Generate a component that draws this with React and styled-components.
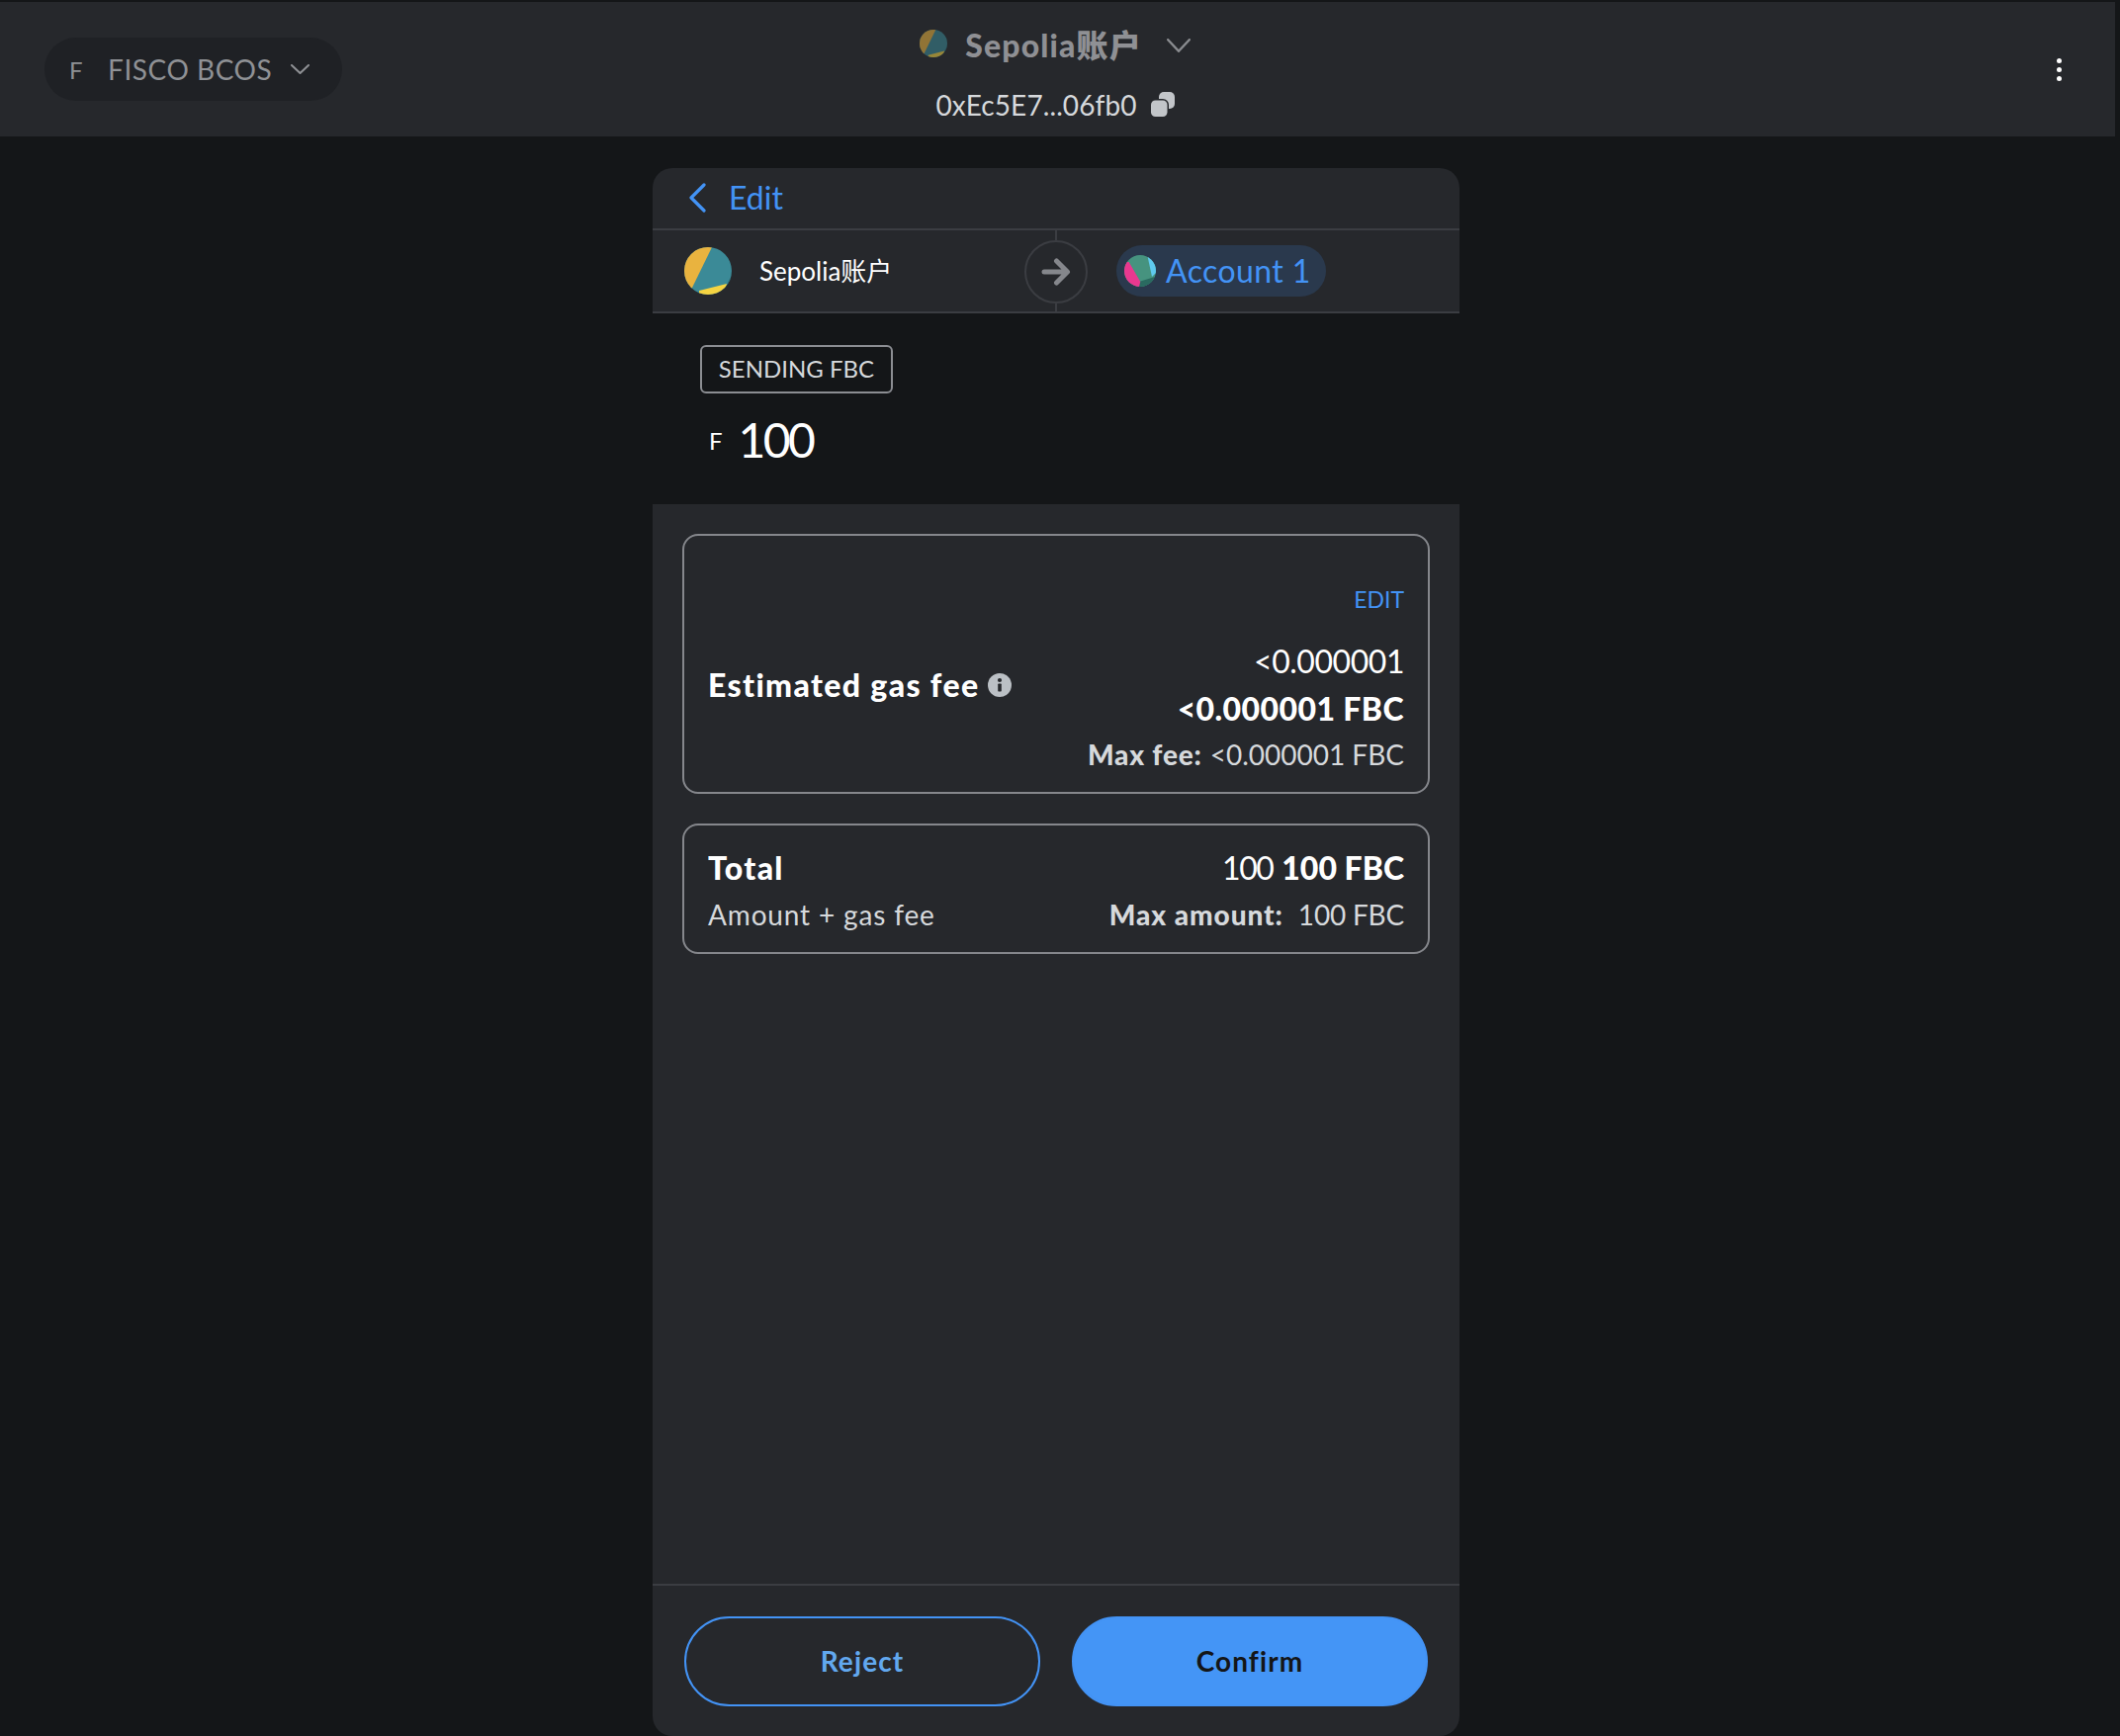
import React from 'react';
import styled, { createGlobalStyle } from 'styled-components';

const Global = createGlobalStyle`
  html, body { margin: 0; padding: 0; background: #141618; }
  body { font-family: Lato, "Noto Sans CJK SC", "Noto Sans", sans-serif; }
  * { box-sizing: border-box; }
`;

const Page = styled.div`
  width: 2144px;
  height: 1756px;
  overflow: hidden;
  background: #141618;
  display: flex;
  flex-direction: column;
  padding-top: 2px;
`;

const TopBar = styled.header`
  width: 2139px;
  height: 136px;
  flex: none;
  background: #26282c;
  display: grid;
  grid-template-columns: 1fr auto 1fr;
  align-items: center;
  padding: 0 54px 0 45px;
`;

const NetworkPill = styled.div`
  justify-self: start;
  width: 301px;
  height: 64px;
  border-radius: 32px;
  background: #1f2125;
  color: #8f9195;
  font-size: 28px;
  display: flex;
  align-items: center;
  padding-left: 25px;
`;

const NetworkInitial = styled.span`
  font-size: 24px;
  width: 39px;
`;

const NetworkName = styled.span`
  letter-spacing: 0.55px;
  margin-right: 19px;
`;

const AccountBlock = styled.div`
  display: flex;
  flex-direction: column;
  align-items: center;
  gap: 36px;
  margin: 8px 0 0 4px;
`;

const AccountName = styled.div`
  display: flex;
  align-items: center;
  height: 28px;
  color: #8f9094;
  font-size: 32px;
  font-weight: 900;
`;

const AccountLabel = styled.span`
  margin: 0 25px 0 18px;
  letter-spacing: 1.15px;
`;

const DimAvatar = styled.span`
  display: flex;
  opacity: 0.55;
`;

const ChevronNudge = styled.span`
  display: flex;
  margin-top: 5px;
`;

const AddressRow = styled.div`
  display: flex;
  align-items: center;
  gap: 14px;
  height: 26px;
  margin-top: -1px;
  color: #d6d9dc;
  font-size: 28px;
  letter-spacing: 0.1px;
`;

const Kebab = styled.div`
  justify-self: end;
  display: flex;
  flex-direction: column;
  gap: 4px;
`;

const Dot = styled.span`
  width: 5px;
  height: 5px;
  border-radius: 50%;
  background: #fff;
`;

const Stage = styled.main`
  flex: 1;
  min-height: 0;
  display: flex;
  justify-content: center;
  padding: 32px 8px 0 0;
`;

const Card = styled.section`
  width: 816px;
  display: flex;
  flex-direction: column;
  background: #26282c;
  border-radius: 20px;
  overflow: hidden;
`;

const EditHeader = styled.div`
  height: 63px;
  flex: none;
  display: flex;
  align-items: center;
  gap: 23px;
  padding: 0 0 2px 37px;
  border-bottom: 2px solid #3b3d42;
  color: #4393f5;
  font-size: 32px;
`;

const PartyRow = styled.div`
  height: 84px;
  flex: none;
  display: grid;
  grid-template-columns: 1fr 64px 1fr;
  border-bottom: 2px solid #3b3d42;
`;

const Sender = styled.div`
  display: flex;
  align-items: center;
  gap: 28px;
  padding-left: 32px;
  color: #fff;
  font-size: 26px;
`;

const SenderName = styled.span`
  margin-bottom: 4px;
`;

const ArrowColumn = styled.div`
  display: flex;
  flex-direction: column;
  align-items: center;
`;

const ArrowStem = styled.span`
  flex: ${(p) => (p.$top ? 'none' : 1)};
  height: ${(p) => (p.$top ? '10px' : 'auto')};
  width: 2px;
  background: #3b3d42;
`;

const ArrowCircle = styled.span`
  width: 64px;
  height: 64px;
  flex: none;
  border: 2px solid #3b3d42;
  border-radius: 50%;
  display: flex;
  align-items: center;
  justify-content: center;
`;

const RecipientCell = styled.div`
  display: flex;
  align-items: center;
  padding-left: 29px;
`;

const RecipientPill = styled.div`
  height: 52px;
  width: 212px;
  border-radius: 26px;
  background: #2a394d;
  color: #4393f5;
  font-size: 32px;
  display: flex;
  align-items: center;
  gap: 10px;
  padding-left: 8px;
  letter-spacing: 0.4px;
`;

const RecipientName = styled.span`
  margin-bottom: 2px;
`;

const AmountSection = styled.div`
  height: 193px;
  flex: none;
  background: #141618;
  padding: 32px 0 0 48px;
`;

const SendingTag = styled.div`
  display: inline-flex;
  align-items: center;
  justify-content: center;
  width: 195px;
  height: 49px;
  padding-bottom: 2px;
  border: 2px solid #8b8d92;
  border-radius: 6px;
  color: #d6d9dc;
  font-size: 24px;
`;

const AmountRow = styled.div`
  display: flex;
  align-items: center;
  gap: 16px;
  margin: 18px 0 0 9px;
  color: #fff;
`;

const AmountSymbol = styled.span`
  font-size: 24px;
`;

const AmountValue = styled.span`
  font-size: 48px;
  line-height: 58px;
  letter-spacing: -2.6px;
`;

const Details = styled.div`
  flex: 1;
  min-height: 0;
  display: flex;
  flex-direction: column;
  gap: 30px;
  padding: 30px 30px 0;
`;

const FeeBox = styled.div`
  border: 2px solid #85878c;
  border-radius: 16px;
  padding: ${(p) => p.$top || 0}px 24px 0;
  display: flex;
  justify-content: space-between;
  align-items: center;
  height: ${(p) => p.$h}px;
`;

const Column = styled.div`
  display: flex;
  flex-direction: column;
  align-items: ${(p) => (p.$right ? 'flex-end' : 'flex-start')};
`;

const EditLink = styled.div`
  color: #4393f5;
  font-size: 23px;
  line-height: 30px;
  margin-bottom: 24px;
`;

const LineLarge = styled.div`
  color: #fff;
  font-size: 32px;
  line-height: 48px;
  font-weight: ${(p) => (p.$bold ? 900 : 400)};
  display: flex;
  align-items: center;
  gap: 9px;
  letter-spacing: ${(p) => p.$ls || 0}px;
  margin-top: ${(p) => p.$mt || 0}px;
`;

const Digits = styled.span`
  letter-spacing: -1.5px;
`;

const LineSmall = styled.div`
  color: #d6d9dc;
  font-size: 28px;
  line-height: ${(p) => p.$lh || 46}px;
  display: flex;
  gap: ${(p) => p.$gap || 8}px;
  letter-spacing: ${(p) => p.$ls || 0}px;
`;

const Strong = styled.b`
  font-weight: 900;
  letter-spacing: ${(p) => p.$ls || 0}px;
`;

const Footer = styled.footer`
  flex: none;
  display: grid;
  grid-template-columns: 360px 360px;
  gap: 32px;
  padding: 31px 32px 30px;
  border-top: 2px solid #3b3d42;
`;

const ActionButton = styled.button`
  height: 91px;
  border-radius: 46px;
  padding: 0 0 2px;
  font-family: inherit;
  font-size: 28px;
  font-weight: 700;
  letter-spacing: 1.1px;
  border: 2px solid #4393f5;
  background: ${(p) => (p.$primary ? '#4495f6' : 'transparent')};
  color: ${(p) => (p.$primary ? '#141618' : '#62a8ef')};
`;

const SenderAvatar = ({ size = 48 }) => (
  <svg width={size} height={size} viewBox="0 0 48 48" style={{ flex: 'none' }}>
    <defs>
      <clipPath id={`sa${size}`}><circle cx="24" cy="24" r="24" /></clipPath>
    </defs>
    <g clipPath={`url(#sa${size})`}>
      <rect width="48" height="48" fill="#3b8a97" />
      <polygon points="28,0 8,41 0,48 -2,-2" fill="#e9b33f" />
      <polygon points="15,44 43,37 40,50 15,50" fill="#f5d442" />
      <polygon points="46,32 50,28 50,38 44,36" fill="#2c6e75" />
    </g>
  </svg>
);

const RecipientAvatar = () => (
  <svg width="32" height="32" viewBox="0 0 32 32" style={{ flex: 'none' }}>
    <defs>
      <clipPath id="ra"><circle cx="16" cy="16" r="16" /></clipPath>
    </defs>
    <g clipPath="url(#ra)">
      <rect width="32" height="32" fill="#46937f" />
      <polygon points="23.7,2 33,2 33,17 28,22" fill="#5fc9ee" />
      <polygon points="14.7,27 31,22 33,33 14.7,33" fill="#2a6a60" />
      <polygon points="4.7,7 16.3,27 14.7,33 -1,33 -1,7" fill="#e8388f" />
    </g>
  </svg>
);

const Chevron = ({ w, h, color, sw = 2 }) => (
  <svg width={w} height={h} viewBox={`0 0 ${w} ${h}`} fill="none" style={{ flex: 'none' }}>
    <path d={`M${sw / 2} ${sw / 2} L${w / 2} ${h - sw / 2} L${w - sw / 2} ${sw / 2}`} stroke={color} strokeWidth={sw} strokeLinecap="round" strokeLinejoin="round" />
  </svg>
);

const BackIcon = () => (
  <svg width="17" height="30" viewBox="0 0 17 30" fill="none" style={{ flex: 'none' }}>
    <path d="M15 2 L2 15 L15 28" stroke="#4393f5" strokeWidth="3.2" strokeLinecap="round" strokeLinejoin="round" />
  </svg>
);

const CopyIcon = () => (
  <svg width="24" height="25" viewBox="0 0 24 25" style={{ flex: 'none' }}>
    <rect x="8" y="0" width="16" height="17" rx="5" fill="#c2c5c9" />
    <rect x="-1" y="7" width="19" height="19" rx="6" fill="#26282c" />
    <rect x="0" y="8.5" width="16.5" height="16.5" rx="4.5" fill="#c2c5c9" />
  </svg>
);

const ArrowIcon = () => (
  <svg width="30" height="28" viewBox="0 0 30 28" fill="none">
    <path d="M3 14 H26 M15.5 3 L26.5 14 L15.5 25" stroke="#85878c" strokeWidth="5" strokeLinecap="round" strokeLinejoin="round" />
  </svg>
);

const InfoIcon = () => (
  <svg width="24" height="24" viewBox="0 0 24 24" style={{ flex: 'none' }}>
    <circle cx="12" cy="12" r="12" fill="#bbc0c5" />
    <rect x="10.2" y="10.5" width="3.6" height="8" rx="0.8" fill="#26282c" />
    <circle cx="12" cy="7" r="2.1" fill="#26282c" />
  </svg>
);

export default function App() {
  return (
    <>
      <Global />
      <Page>
        <TopBar>
          <NetworkPill>
            <NetworkInitial>F</NetworkInitial>
            <NetworkName>FISCO BCOS</NetworkName>
            <Chevron w={19} h={10} color="#8f9195" sw={2} />
          </NetworkPill>
          <AccountBlock>
            <AccountName>
              <DimAvatar><SenderAvatar size={28} /></DimAvatar>
              <AccountLabel>Sepolia账户</AccountLabel>
              <ChevronNudge><Chevron w={24} h={14} color="#8a8c90" sw={2.4} /></ChevronNudge>
            </AccountName>
            <AddressRow>
              <span>0xEc5E7...06fb0</span>
              <CopyIcon />
            </AddressRow>
          </AccountBlock>
          <Kebab><Dot /><Dot /><Dot /></Kebab>
        </TopBar>
        <Stage>
          <Card>
            <EditHeader><BackIcon />Edit</EditHeader>
            <PartyRow>
              <Sender><SenderAvatar /><SenderName>Sepolia账户</SenderName></Sender>
              <ArrowColumn>
                <ArrowStem $top />
                <ArrowCircle><ArrowIcon /></ArrowCircle>
                <ArrowStem />
              </ArrowColumn>
              <RecipientCell>
                <RecipientPill><RecipientAvatar /><RecipientName>Account 1</RecipientName></RecipientPill>
              </RecipientCell>
            </PartyRow>
            <AmountSection>
              <SendingTag>SENDING FBC</SendingTag>
              <AmountRow>
                <AmountSymbol>F</AmountSymbol>
                <AmountValue>100</AmountValue>
              </AmountRow>
            </AmountSection>
            <Details>
              <FeeBox $h={263} $top={34}>
                <LineLarge $bold $ls={1.35} $mt={8}>Estimated gas fee <InfoIcon /></LineLarge>
                <Column $right>
                  <EditLink>EDIT</EditLink>
                  <LineLarge $ls={-0.45}>&lt;0.000001</LineLarge>
                  <LineLarge $bold $ls={0.4}>&lt;0.000001 FBC</LineLarge>
                  <LineSmall $lh={45}><Strong $ls={0.8}>Max fee:</Strong><span>&lt;0.000001 FBC</span></LineSmall>
                </Column>
              </FeeBox>
              <FeeBox $h={132} $top={3}>
                <Column>
                  <LineLarge $bold $ls={1.3}>Total</LineLarge>
                  <LineSmall $ls={0.85}>Amount + gas fee</LineSmall>
                </Column>
                <Column $right>
                  <LineLarge><Digits>100</Digits><Strong>100 FBC</Strong></LineLarge>
                  <LineSmall $gap={15} $ls={-0.2}><Strong $ls={0.95}>Max amount:</Strong><span>100 FBC</span></LineSmall>
                </Column>
              </FeeBox>
            </Details>
            <Footer>
              <ActionButton>Reject</ActionButton>
              <ActionButton $primary>Confirm</ActionButton>
            </Footer>
          </Card>
        </Stage>
      </Page>
    </>
  );
}
